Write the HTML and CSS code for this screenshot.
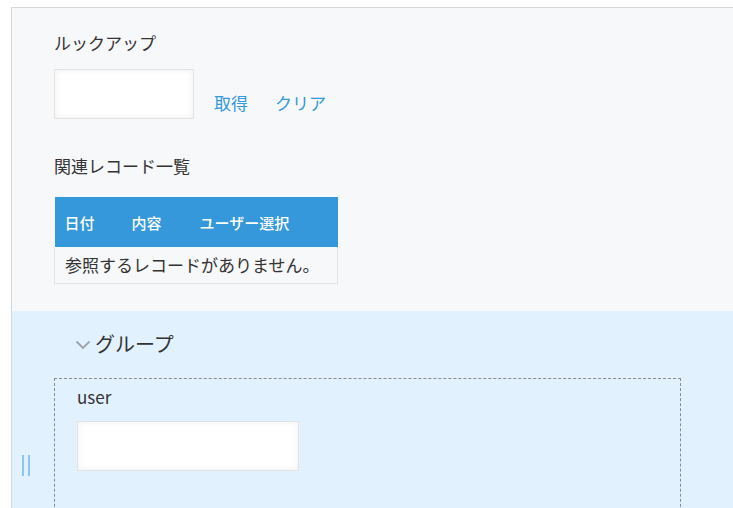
FILE: index.html
```html
<!DOCTYPE html>
<html lang="ja">
<head>
    <meta charset="UTF-8">
    <meta name="viewport" content="width=device-width, initial-scale=1.0">
    <title>フォーム</title>
    <link rel="stylesheet" href="styles.css">
</head>
<body>
    <div class="form-layout">
        <div class="form-main">
            <div class="field">
                <div class="field-label">ルックアップ</div>
                <div class="lookup-row">
                    <div class="text-input"></div>
                    <a class="lookup-link" href="#">取得</a>
                    <a class="lookup-link" href="#">クリア</a>
                </div>
            </div>

            <div class="field field-related">
                <div class="field-label">関連レコード一覧</div>
                <table class="related-table">
                    <thead>
                        <tr>
                            <th class="col-date">日付</th>
                            <th class="col-content">内容</th>
                            <th class="col-user">ユーザー選択</th>
                        </tr>
                    </thead>
                    <tbody>
                        <tr>
                            <td colspan="3">参照するレコードがありません。</td>
                        </tr>
                    </tbody>
                </table>
            </div>
        </div>

        <div class="group-section">
            <span class="drag-handle"></span>
            <div class="group-header">
                <svg class="chevron" width="16" height="10" viewBox="0 0 16 10">
                    <path d="M1.5 1.5 L8 8 L14.5 1.5" fill="none" stroke="#9ea3a8" stroke-width="1.8"/>
                </svg>
                <span class="group-title">グループ</span>
            </div>
            <div class="group-body">
                <div class="field-label">user</div>
                <div class="text-input text-input-wide"></div>
            </div>
        </div>
    </div>
</body>
</html>
```

FILE: styles.css
```css
* {
    margin: 0;
    padding: 0;
    box-sizing: border-box;
}

html, body {
    height: 100%;
    overflow: hidden;
}

body {
    background: #ffffff;
    color: #333333;
    font-family: 'Noto Sans CJK JP', 'Noto Sans', sans-serif;
    font-size: 17px;
    padding: 7px 0 0 11px;
}

.form-layout {
    background: #f7f8fa;
    border-top: 1px solid #d6d8da;
    border-left: 1px solid #d6d8da;
    height: 100%;
}

.form-main {
    padding: 25px 0 27px 42px;
}

.field-label {
    line-height: 20px;
    color: #333333;
}

.lookup-row {
    display: flex;
    align-items: flex-end;
    margin-top: 16px;
}

.text-input {
    width: 140px;
    height: 50px;
    background: #ffffff;
    border: 1px solid #e3e3e3;
    box-shadow: inset 0 0 6px rgba(0, 0, 0, 0.07);
}

.lookup-link {
    color: #3498db;
    text-decoration: none;
    line-height: 20px;
    margin-bottom: 6px;
    margin-left: 20px;
}

.lookup-link + .lookup-link {
    margin-left: 27px;
}

.field-related {
    margin-top: 37px;
}

.related-table {
    margin-top: 21px;
    border-collapse: collapse;
    width: 284px;
}

.related-table th {
    background: #3498db;
    color: #ffffff;
    font-size: 15px;
    font-weight: 500;
    text-align: left;
    height: 50px;
    padding: 0 0 0 10px;
    white-space: nowrap;
}

.col-date {
    width: 67px;
}

.col-content {
    width: 68px;
}

.related-table td {
    height: 36px;
    padding: 0 0 0 10px;
    border: 1px solid #e3e3e3;
    border-top: none;
    white-space: nowrap;
}

.group-section {
    position: relative;
    background: #e1f1fe;
    padding: 18px 0 0 42px;
    height: 100%;
}

.drag-handle {
    position: absolute;
    left: 10px;
    top: 144px;
    width: 8px;
    height: 21px;
    border-left: 2px solid #8cc6ef;
    border-right: 2px solid #8cc6ef;
}

.group-header {
    display: flex;
    align-items: center;
    height: 30px;
    padding-left: 21px;
}

.chevron {
    display: block;
    margin-right: 4px;
    margin-top: 2px;
}

.group-title {
    font-size: 20px;
    line-height: 30px;
    color: #333333;
}

.group-body {
    margin-top: 19px;
    width: 627px;
    height: 300px;
    border: 1px dashed #8a8a8a;
    padding: 8px 0 0 22px;
}

.group-body .field-label {
    margin-bottom: 14px;
}

.text-input-wide {
    width: 222px;
}
```
